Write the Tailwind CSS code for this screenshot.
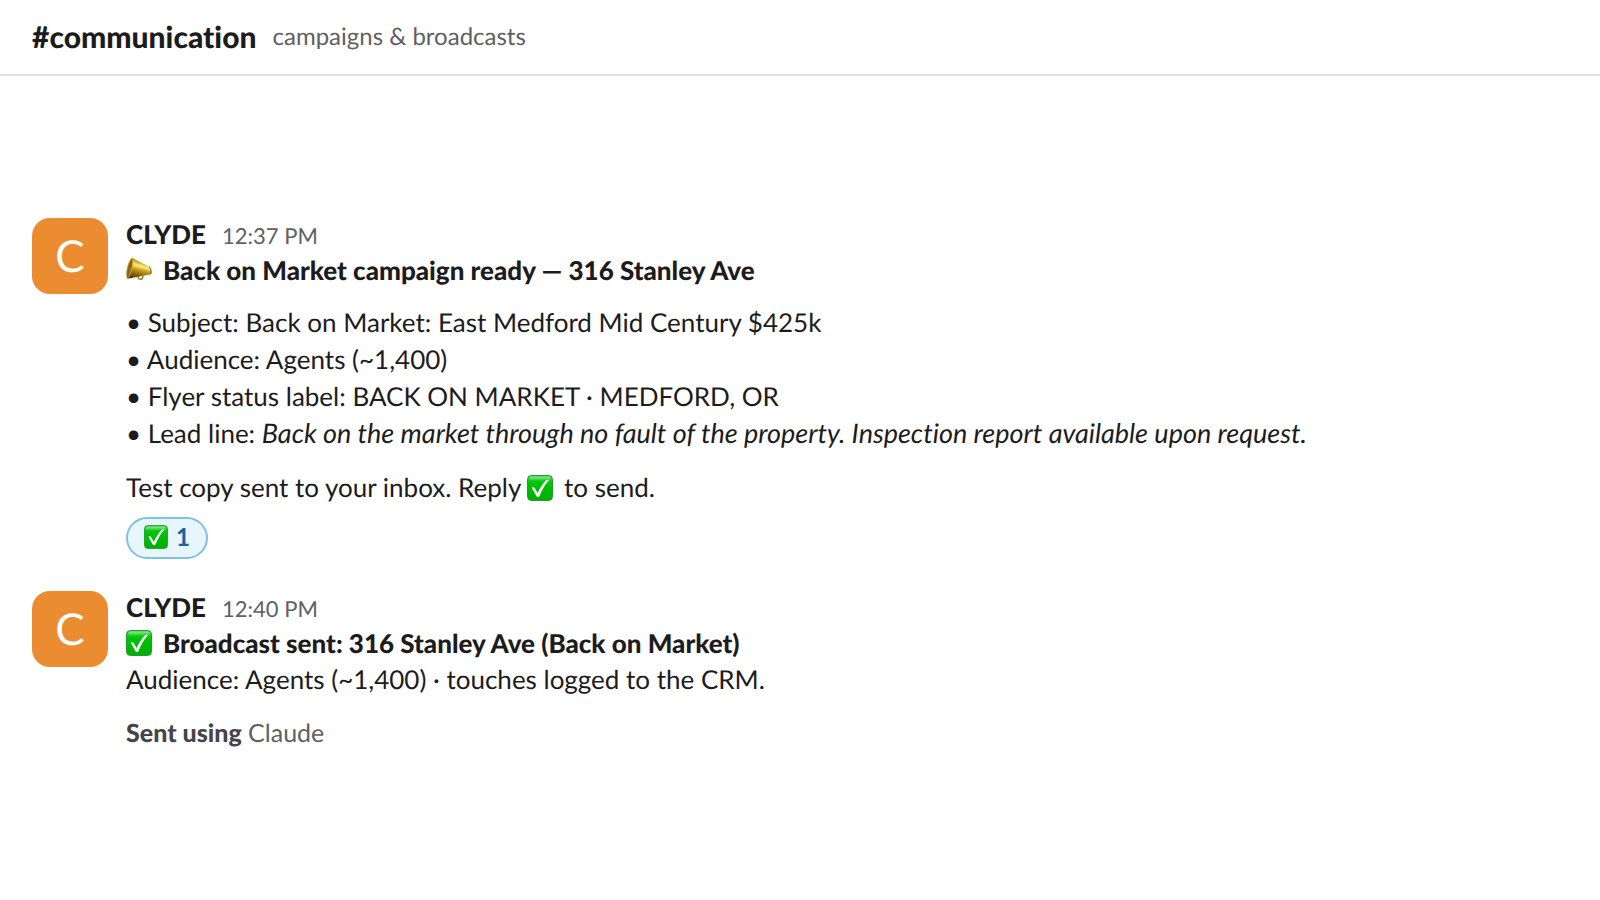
<!DOCTYPE html>
<html lang="en">
<head>
<meta charset="utf-8">
<meta name="viewport" content="width=device-width, initial-scale=1">
<title>#communication</title>
<script src="https://cdn.jsdelivr.net/npm/@tailwindcss/browser@4"></script>
</head>
<body class="flex min-h-screen flex-col bg-white font-['Lato','Noto_Sans',sans-serif] text-[26px] leading-[36px] text-[#1d1c1d] [font-variant-ligatures:none] [text-rendering:geometricPrecision]">
<svg class="absolute size-0" aria-hidden="true">
  <defs>
    <linearGradient id="green" x1="0" y1="0" x2="0" y2="1">
      <stop offset="0" stop-color="#3fd04a"/><stop offset=".18" stop-color="#12cb1c"/><stop offset=".3" stop-color="#00c404"/><stop offset="1" stop-color="#00ad06"/>
    </linearGradient>
    <linearGradient id="shine" x1="0" y1="0" x2="0" y2="1">
      <stop offset="0" stop-color="#fff" stop-opacity=".45"/><stop offset="1" stop-color="#fff" stop-opacity=".08"/>
    </linearGradient>
    <linearGradient id="gold" x1=".65" y1="0" x2=".35" y2="1">
      <stop offset="0" stop-color="#6f520c"/><stop offset=".25" stop-color="#d9b72f"/><stop offset=".42" stop-color="#f6e36a"/><stop offset=".58" stop-color="#c79a14"/><stop offset="1" stop-color="#4a3106"/>
    </linearGradient>
    <linearGradient id="bell" x1="0" y1="0" x2="1" y2="1">
      <stop offset="0" stop-color="#b98f22"/><stop offset=".5" stop-color="#8a5c1a"/><stop offset="1" stop-color="#d5b044"/>
    </linearGradient>
  </defs>
  <symbol id="check" viewBox="0 0 26 26">
    <rect x=".5" y=".5" width="25" height="25" rx="4" fill="url(#green)" stroke="#1f9d2b"/>
    <rect x="2" y="1.5" width="22" height="4" rx="2" fill="url(#shine)"/>
    <path d="M4.800 12.700c1-.8 2.300-.6 2.900.4l2.900 5C12.800 13.500 15.600 8.800 19 5.300c.8-.8 2.200-.7 2.900-.1-4.400 5.100-7.300 10.300-9.400 16-.5 1-2.500 1-3 0z" fill="#fff"/>
  </symbol>
  <symbol id="horn" viewBox="0 0 26 26">
    <path d="M12.300 18.500v2c0 1.300 1 2 2.700 1.700 1.700-.2 2-1 1.800-3.500" fill="none" stroke="#a87b14" stroke-width="1.500"/>
    <path d="M6 .8 24.300 10.300c1.700.8 2.200 5.700.8 6.900L1.400 21.800C-.4 17 2 5.500 6 .8z" fill="url(#gold)"/>
    <path d="M6 .8C8 6 5.600 17 1.300 21.800-.6 17 1.300 5.500 6 .8z" fill="url(#bell)" stroke="#d9b53c" stroke-width=".7"/>
    <path d="M8.500 6.500 22.800 12" stroke="#fff6a8" stroke-width="1.200" opacity=".8"/>
    <path d="M23.300 10.200c1.600 1 2.300 5.500.9 7" fill="none" stroke="#6d4e0c" stroke-width=".8"/>
  </symbol>
</svg>

<header class="flex items-center gap-4 border-b-2 border-[#e0e0e0] px-8 py-[19px]">
  <h1 class="text-[30px] font-black">#communication</h1>
  <p class="text-[24px] text-[#616061]">campaigns &amp; broadcasts</p>
</header>

<main class="flex flex-1 flex-col justify-center gap-8 px-8 pb-2">
  <article class="flex items-start gap-[18px]">
    <div class="flex size-[76px] shrink-0 items-center justify-center rounded-[18px] bg-[#ec8c30] text-[44px] text-white" aria-hidden="true">C</div>
    <div class="min-w-0 flex-1">
      <div class="mb-0.5 flex items-baseline gap-4 leading-8">
        <h2 class="font-black">CLYDE</h2>
        <time class="text-[22px] leading-none text-[#616061]" datetime="12:37">12:37 PM</time>
      </div>
      <p class="flex items-center gap-[11px] font-black"><svg class="size-[26px] shrink-0" role="img" aria-label="Megaphone"><use href="#horn"/></svg>Back on Market campaign ready — 316 Stanley Ave</p>
      <ul class="mt-4 flex flex-col gap-px">
        <li>• Subject: Back on Market: East Medford Mid Century $425k</li>
        <li>• Audience: Agents (~1,400)</li>
        <li>• Flyer status label: BACK ON MARKET · MEDFORD, OR</li>
        <li>• Lead line: <em class="text-[27px]">Back on the market through no fault of the property. Inspection report available upon request.</em></li>
      </ul>
      <p class="mt-[18px]">Test copy sent to your inbox. Reply <svg class="mr-1 inline-block size-[26px] align-[-4px]" role="img" aria-label="Check mark"><use href="#check"/></svg> to send.</p>
      <button type="button" class="mt-3 flex h-[42px] items-center gap-2 rounded-full border-2 border-[#7fc3e3] bg-[#e8f5fa] px-4 pb-0.5 text-[24px] font-bold text-[#1264a3]"><svg class="size-6" role="img" aria-label="Check mark"><use href="#check"/></svg>1</button>
    </div>
  </article>

  <article class="flex items-start gap-[18px]">
    <div class="flex size-[76px] shrink-0 items-center justify-center rounded-[18px] bg-[#ec8c30] text-[44px] text-white" aria-hidden="true">C</div>
    <div class="min-w-0 flex-1">
      <div class="mb-0.5 flex items-baseline gap-4 leading-8">
        <h2 class="font-black">CLYDE</h2>
        <time class="text-[22px] leading-none text-[#616061]" datetime="12:40">12:40 PM</time>
      </div>
      <p class="flex items-center gap-[11px] font-black"><svg class="size-[26px] shrink-0" role="img" aria-label="Check mark"><use href="#check"/></svg>Broadcast sent: 316 Stanley Ave (Back on Market)</p>
      <p>Audience: Agents (~1,400) · touches logged to the CRM.</p>
      <p class="mt-[18px] text-[25px] text-[#616061]"><strong class="font-black text-[#454447]">Sent using</strong> Claude</p>
    </div>
  </article>
</main>
</body>
</html>
